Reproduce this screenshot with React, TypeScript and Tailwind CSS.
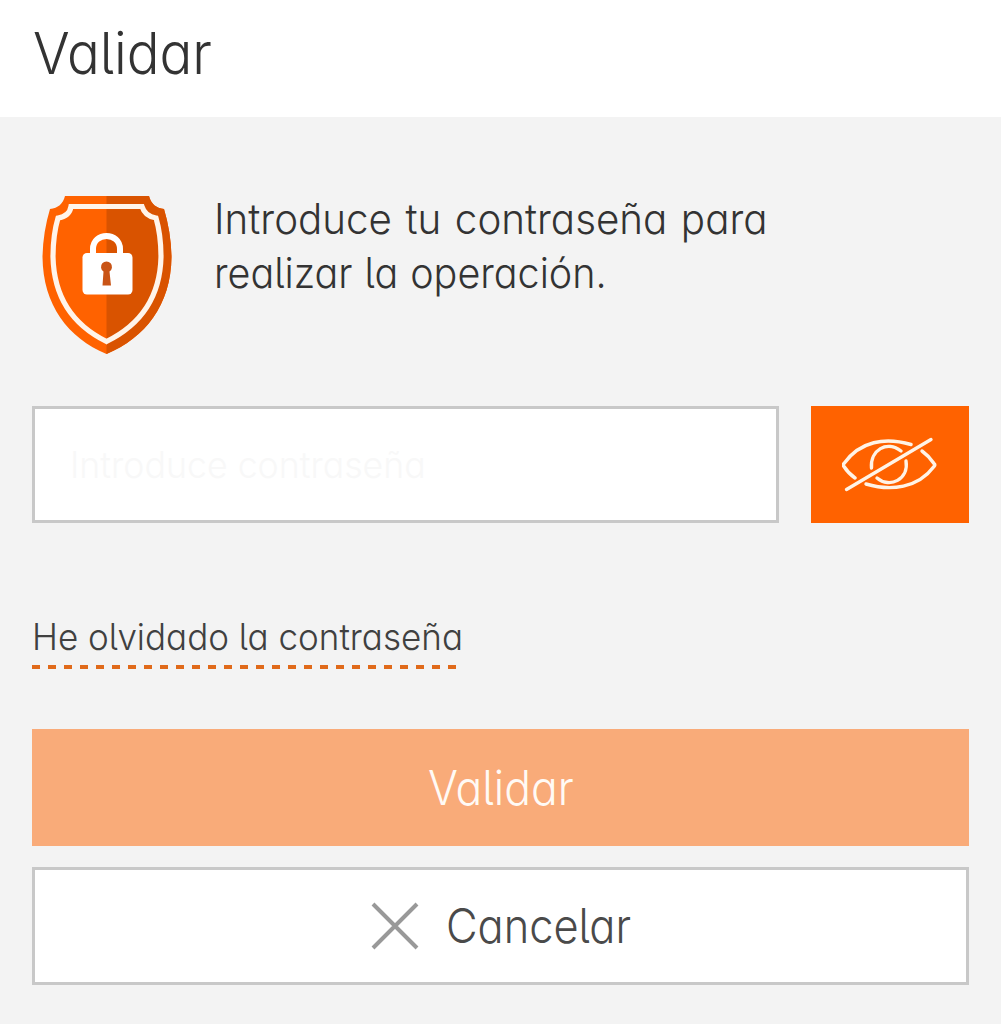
const face = "[font-feature-settings:'cv11','cv05']";

function ShieldIcon() {
  return (
    <svg className="h-[160px] w-[132px] shrink-0" viewBox="41 195 132 160" fill="none">
      <defs>
        <clipPath id="right-half">
          <rect x="106.5" y="190" width="80" height="170" />
        </clipPath>
      </defs>
      <path
        d="M65 196H149C151 204 156 208 164 209Q171 232 171.5 257C171 305 145 338 106.5 354C68 338 43 305 42.500 257Q43 232 50 209C58 208 63 204 65 196Z"
        fill="#ff6200"
      />
      <path
        clipPath="url(#right-half)"
        d="M65 196H149C151 204 156 208 164 209Q171 232 171.5 257C171 305 145 338 106.500 354C68 338 43 305 42.500 257Q43 232 50 209C58 208 63 204 65 196Z"
        fill="#d95300"
      />
      <path
        d="M71 206.500H142C144 213 149 217 156 218Q161 235 161 257C160 298 140 325 106.500 341.500C73 325 54 298 53 257Q53 235 58 218C65 217 70 213 71 206.500Z"
        stroke="#fff4ea"
        strokeWidth="5.2"
      />
      <path d="M93 256V249C93 231.500 120 231.500 120 249V256" stroke="#fff" strokeWidth="6" />
      <rect x="82.500" y="253" width="50" height="41.500" rx="4.500" fill="#fff" />
      <path d="M103.500 271.500A5.500 5.500 0 1 1 109.500 271.500L111 285.500H102.500Z" fill="#c95416" />
    </svg>
  );
}

function EyeOffIcon() {
  return (
    <svg className="h-[56px] w-[96px]" viewBox="842 437 96 56" fill="none" stroke="#fff3e6" strokeWidth="3.4" strokeLinecap="round" strokeLinejoin="round">
      <path d="M911 444.500C885 437 860 441 844 463.500Q842.500 465 844 466.500Q848 473 855 478" />
      <path d="M866 484C891 491.500 918 488 934 466.500Q935.500 465 934 463.500Q929 456 922 451" />
      <path d="M901 451C887 440 870 450 871.500 468" />
      <path d="M877 478C890 489 909 479 906 461" />
      <path d="M846.500 489.500L931 439.500" />
    </svg>
  );
}

export default function App() {
  return (
    <main className={`h-[1024px] w-full overflow-hidden bg-[#f3f3f3] font-['Inter',sans-serif] font-[350] text-[#333333] ${face}`}>
      <header className="h-[117px] bg-white pl-[33px] pt-[18px]">
        <h1 className="w-max origin-left scale-x-[0.94] whitespace-nowrap text-[58px] leading-[70px]">Validar</h1>
      </header>

      <section className="flex h-[289px] pl-[41px] pt-[78px]">
        <ShieldIcon />
        <p className="ml-[41px] -mt-[3px] text-[42px] leading-[54px]">
          <span className="block w-max origin-left scale-x-[0.96] [word-spacing:2.3px]">Introduce tu contraseña para</span>
          <span className="block w-max origin-left scale-x-[0.94] [word-spacing:1px]">realizar la operación.</span>
        </p>
      </section>

      <form className="px-8" onSubmit={(e) => e.preventDefault()}>
        <div className="flex h-[117px] gap-8">
          <div className="flex flex-1 items-center border-[3px] border-[#c8c8c8] bg-white pl-[35px]">
            <span className="w-max origin-left scale-x-[0.965] whitespace-nowrap text-[37px] leading-[54px] text-[#f8f8f8]">Introduce contraseña</span>
          </div>
          <button type="button" aria-label="Mostrar contraseña" className="flex w-[158px] items-center justify-center bg-[#ff6200]">
            <EyeOffIcon />
          </button>
        </div>

        <a className="mt-[91px] block h-[54px] w-[430px] text-[#404040]">
          <span className="block w-max origin-left scale-x-[0.946] whitespace-nowrap text-[37px] leading-[46px]">He olvidado la contraseña</span>
          <span className="mt-[5px] block h-1 w-[425px] bg-[repeating-linear-gradient(90deg,#e06a1a_0_8px,transparent_8px_16px)]" />
        </a>

        <button type="button" className="mt-[61px] flex h-[117px] w-full items-center justify-center bg-[#f9ab79] text-[48px] text-[#fffaf5]">
          <span className="scale-x-[0.925]">Validar</span>
        </button>
        <button type="button" className="mt-[21px] flex h-[118px] w-full items-center border-[3px] border-[#c8c8c8] bg-white pl-[336px] text-[48px] text-[#4a4a4a]">
          <svg className="h-[48px] w-[48px]" viewBox="0 0 48 48" stroke="#999" strokeWidth="4">
            <path d="M2 2L46 46M46 2L2 46" />
          </svg>
          <span className="ml-[27px] origin-left scale-x-[0.903]">Cancelar</span>
        </button>
      </form>
    </main>
  );
}
